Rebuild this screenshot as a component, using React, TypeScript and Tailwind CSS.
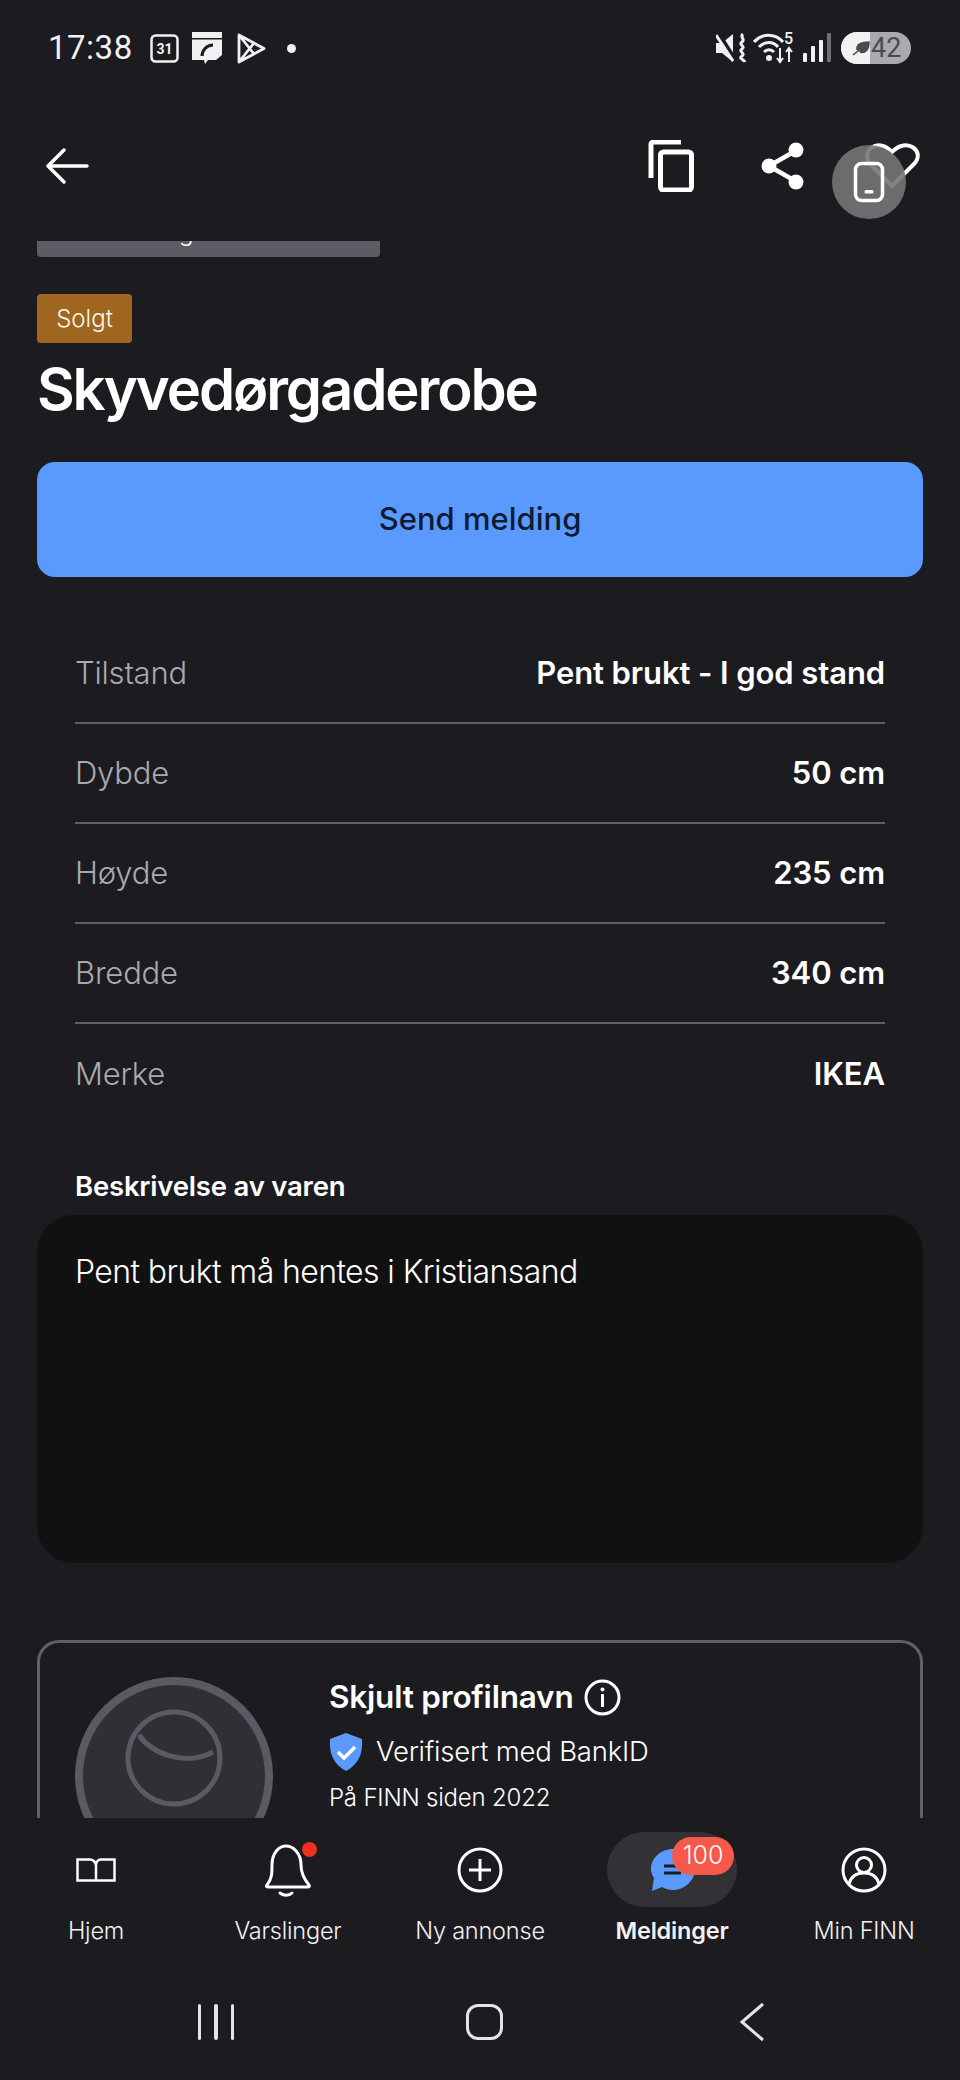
const FONT = "font-['Inter','Noto_Sans',sans-serif]";

const rows = [
  { label: "Tilstand", value: "Pent brukt - I god stand" },
  { label: "Dybde", value: "50 cm" },
  { label: "Høyde", value: "235 cm" },
  { label: "Bredde", value: "340 cm" },
  { label: "Merke", value: "IKEA" },
];

const StatusBar = () => (
  <div className="h-[96px] shrink-0 flex items-center pl-[48px] pr-[49px] text-[#f1f1f3]">
    <span className="text-[33px] font-normal w-[102px] font-['Roboto',sans-serif] tracking-[0.5px]">17:38</span>
    <svg width="29" height="29" viewBox="0 0 29 29">
      <rect x="1.5" y="1.5" width="26" height="26" rx="4" fill="none" stroke="currentColor" strokeWidth="2.5" />
      <text x="14.5" y="20" textAnchor="middle" fontSize="14" fontWeight="700" fill="currentColor" fontFamily="Roboto">31</text>
    </svg>
    <svg width="30" height="32" viewBox="0 0 30 32" className="ml-[13px]">
      <path d="M0 0h30v23l-6 5h-8l-3 4-1-4H0z" fill="currentColor" />
      <rect x="0" y="6" width="30" height="1.5" fill="#1b1b20" />
      <path d="M10 24c0-6 5-11 11-11" fill="none" stroke="#1b1b20" strokeWidth="3" />
    </svg>
    <svg width="31" height="33" viewBox="0 0 31 33" className="ml-[14px]">
      <path d="M3 3l25 13.500L3 30z M3 3l15 19 M3 30l15-19" fill="none" stroke="currentColor" strokeWidth="2.800" strokeLinejoin="round" />
    </svg>
    <div className="ml-[20px] w-[9px] h-[9px] rounded-full bg-[#f1f1f3]" />
    <div className="flex-1" />
    <svg width="32" height="30" viewBox="0 0 32 30">
      <path d="M0 10h6l11-9v28L6 20H0z" fill="currentColor" />
      <path d="M3 1l17 27" stroke="#1b1b20" strokeWidth="4" />
      <path d="M0 2l17 26" stroke="currentColor" strokeWidth="3" />
      <path d="M27 1c-4 3 3 5-1 8s4 4 0 7 4 4 0 7 2 3 3 6" fill="none" stroke="currentColor" strokeWidth="3" />
    </svg>
    <svg width="42" height="32" viewBox="0 0 42 32" className="ml-[5px]">
      <path d="M1 10c8-9 21-9 29 0M6 15c6-6 14-6 19 0M11 20c3-3 7-3 10 0" fill="none" stroke="currentColor" strokeWidth="3" />
      <circle cx="16" cy="26" r="3" fill="currentColor" />
      <text x="35.500" y="12" textAnchor="middle" fontSize="16" fontWeight="500" fill="currentColor" fontFamily="Roboto">5</text>
      <path d="M27 16v14M24 26l3 4 3-4M36 30V16M33 20l3-4 3 4" fill="none" stroke="currentColor" strokeWidth="2" />
    </svg>
    <svg width="28" height="30" viewBox="0 0 28 30" className="ml-[8px]">
      <rect x="0" y="20" width="4" height="9" rx="1" fill="currentColor" />
      <rect x="8" y="13" width="4" height="16" rx="1" fill="currentColor" />
      <rect x="16" y="7" width="4" height="22" rx="1" fill="currentColor" />
      <rect x="24" y="0" width="4" height="29" rx="1" fill="#6e6e73" />
    </svg>
    <div className="ml-[10px] w-[70px] h-[32px] rounded-full overflow-hidden flex bg-[#a9a9ae]">
      <div className="w-[29px] bg-[#f1f1f3] flex items-center justify-end">
        <svg width="18" height="18" viewBox="0 0 18 18">
          <path d="M1 16c3-2 4-3 6-5M5 11C4 5 10 3 17 3c0 7-3 12-9 10" fill="#4a4a50" stroke="#4a4a50" strokeWidth="1.500" />
        </svg>
      </div>
      <span className="pl-[1px] text-[#4a4a50] text-[27px] leading-[32px] font-['Roboto',sans-serif]">42</span>
    </div>
  </div>
);

const Header = () => (
  <div className="h-[145px] shrink-0 relative flex items-center pl-[45px] pb-[5px] text-white">
    <svg width="44" height="36" viewBox="0 0 44 36">
      <path d="M42 18H3M19 2L3 18l16 16" fill="none" stroke="currentColor" strokeWidth="3.500" strokeLinecap="round" strokeLinejoin="round" />
    </svg>
    <div className="flex-1" />
    <svg width="46" height="52" viewBox="0 0 46 52">
      <path d="M33 2H5a3 3 0 0 0-2 2v34" fill="none" stroke="currentColor" strokeWidth="5" />
      <rect x="12.500" y="12" width="31" height="38" rx="3" fill="none" stroke="currentColor" strokeWidth="5" />
    </svg>
    <svg width="44" height="48" viewBox="0 0 44 48" className="ml-[67px]">
      <path d="M8 24L36 8M8 24l28 16" stroke="currentColor" strokeWidth="4.500" />
      <circle cx="35" cy="8" r="7.500" fill="currentColor" />
      <circle cx="8" cy="24" r="7.500" fill="currentColor" />
      <circle cx="35" cy="40" r="7.500" fill="currentColor" />
    </svg>
    <svg width="62" height="50" viewBox="0 0 62 50" className="ml-[56px] mr-[37px] mt-[-2px]">
      <path d="M31 46L9 24C-1 12 16 -4 31 12 46 -4 65 12 53 24z" fill="none" stroke="currentColor" strokeWidth="4" />
    </svg>
    {/* floating screen-capture button over the heart */}
    <div className="absolute left-[832px] top-[49px] w-[74px] h-[74px] rounded-full bg-[#767678]/90 flex items-center justify-center">
      <svg width="32" height="42" viewBox="0 0 32 42">
        <rect x="2.500" y="2.500" width="27" height="37" rx="6" fill="none" stroke="white" strokeWidth="3.500" />
        <rect x="11.500" y="29" width="9" height="3.500" rx="1.500" fill="white" />
      </svg>
    </div>
  </div>
);

const ProfileCard = () => (
  <div className="mx-[37px] mt-[77px] h-[260px] shrink-0 rounded-[22px] border-[3px] border-[#5f5f67] pl-[35px] pt-[34px] flex gap-[56px]">
    <div className="w-[198px] h-[198px] rounded-full border-[8px] border-[#5a5a63] bg-[#2f2f35] flex items-start justify-center pt-[24px] shrink-0">
      <svg width="98" height="98" viewBox="0 0 98 98">
        <circle cx="49" cy="49" r="46" fill="none" stroke="#5a5a63" strokeWidth="5" />
        <path d="M14 26C26 44 60 58 88 43" fill="none" stroke="#5a5a63" strokeWidth="5" />
      </svg>
    </div>
    <div className="flex flex-col text-white">
      <div className="flex items-center gap-[11px] h-[40px]">
        <span className="text-[31.500px] font-semibold tracking-[-0.2px]">Skjult profilnavn</span>
        <svg width="37" height="37" viewBox="0 0 37 37">
          <circle cx="18.500" cy="18.500" r="16.500" fill="none" stroke="white" strokeWidth="3" />
          <rect x="17" y="15" width="3" height="13" fill="white" />
          <circle cx="18.500" cy="10.500" r="2" fill="white" />
        </svg>
      </div>
      <div className="flex items-center gap-[13px] mt-[16px] h-[38px]">
        <svg width="34" height="38" viewBox="0 0 34 38">
          <path d="M17 0l16 6c1 14-3 25-16 32C4 31 0 20 1 6z" fill="#5a9afe" />
          <path d="M9 19l6 6 11-11" fill="none" stroke="white" strokeWidth="3.500" />
        </svg>
        <span className="text-[27.500px] font-light tracking-[-0.2px]">Verifisert med BankID</span>
      </div>
      <span className="text-[24px] font-light mt-[9px] tracking-[-0.2px]">På FINN siden 2022</span>
    </div>
  </div>
);

const NavItem = ({ label, bold, children }: { label: string; bold?: boolean; children: React.ReactNode }) => (
  <div className="flex flex-col items-center">
    <div className="h-[75px] w-[130px] flex items-center justify-center relative">{children}</div>
    <span className={`mt-[6px] text-[23.500px] leading-[36px] text-[#f1f1f3] tracking-[-0.2px] ${bold ? "font-semibold" : "font-light"}`}>
      {label}
    </span>
  </div>
);

const BottomNav = () => (
  <div className="h-[161px] shrink-0 pt-[14px] grid grid-cols-5 text-white">
    <NavItem label="Hjem">
      <svg width="40" height="24" viewBox="0 0 40 24">
        <path d="M1.500 1.500h12c4 0 6 3 6.500 6v15H1.500zM20 7.500c0-3 1.500-6 5-6h13.500v21H20" fill="none" stroke="currentColor" strokeWidth="2.500" />
      </svg>
    </NavItem>
    <NavItem label="Varslinger">
      <svg width="50" height="56" viewBox="0 0 50 56">
        <path d="M3 43c5-6 5-12 5-20C8 11 15 4 22 4s15 7 15 19c0 8 3 14 8 20 1 1 0 2-1 2H4c-2 0-2-1-1-2z" transform="translate(1 0)" fill="none" stroke="currentColor" strokeWidth="3" strokeLinejoin="round" />
        <path d="M17 51c4 3 9 3 12 0" fill="none" stroke="currentColor" strokeWidth="3" strokeLinecap="round" />
      </svg>
      <div className="absolute left-[79px] top-[10px] w-[15px] h-[15px] rounded-full bg-[#f0301c]" />
    </NavItem>
    <NavItem label="Ny annonse">
      <svg width="46" height="46" viewBox="0 0 46 46">
        <circle cx="23" cy="23" r="21" fill="none" stroke="currentColor" strokeWidth="3" />
        <path d="M23 12v22M12 23h22" stroke="currentColor" strokeWidth="3" />
      </svg>
    </NavItem>
    <NavItem label="Meldinger" bold>
      <div className="absolute inset-0 rounded-full bg-[#313136]" />
      <svg width="44" height="44" viewBox="0 0 44 44" className="absolute left-[44px] top-[17px]">
        <path d="M22 0c12 0 22 9 22 20S34 41 22 41c-4 0-8-1-11-3L1 42l2-13C1 26 0 23 0 20 0 9 10 0 22 0z" fill="#5a9afe" />
        <path d="M13 17h17M13 24h17" stroke="#1b1b20" strokeWidth="3" />
      </svg>
      <div className="absolute left-[65px] top-[5px] w-[62px] h-[38px] rounded-full bg-[#f6584a] flex items-center justify-center text-[25px] font-light text-white">
        100
      </div>
    </NavItem>
    <NavItem label="Min FINN">
      <svg width="46" height="46" viewBox="0 0 46 46">
        <circle cx="23" cy="23" r="21" fill="none" stroke="currentColor" strokeWidth="3" />
        <circle cx="23" cy="18" r="7.500" fill="none" stroke="currentColor" strokeWidth="3" />
        <path d="M8 37c2-8 8-11 15-11s13 3 15 11" fill="none" stroke="currentColor" strokeWidth="3" />
      </svg>
    </NavItem>
  </div>
);

const SystemNav = () => (
  <div className="flex-1 grid grid-cols-3 items-center pl-[82px] pr-[74px] pb-[16px] text-[#e4e4e6]">
    <div className="flex justify-center gap-[13px]">
      <div className="w-[3.500px] h-[36px] bg-[#e4e4e6] rounded-sm" />
      <div className="w-[3.500px] h-[36px] bg-[#e4e4e6] rounded-sm" />
      <div className="w-[3.500px] h-[36px] bg-[#e4e4e6] rounded-sm" />
    </div>
    <div className="flex justify-center">
      <div className="w-[37px] h-[36px] rounded-[12px] border-[3.500px] border-[#e4e4e6]" />
    </div>
    <div className="flex justify-center">
      <svg width="26" height="40" viewBox="0 0 26 40">
        <path d="M24 2L3 20l21 18" fill="none" stroke="currentColor" strokeWidth="3" />
      </svg>
    </div>
  </div>
);

export default function App() {
  return (
    <div className={`w-[960px] h-[2080px] bg-[#1b1b20] flex flex-col overflow-hidden ${FONT}`}>
      <StatusBar />
      <Header />
      <main className="h-[1577px] shrink-0 overflow-hidden flex flex-col text-white">
        <div className="mx-[37px] w-[343px] h-[16px] shrink-0 bg-[#5c5c65] rounded-b-[4px] overflow-hidden pl-[142px]">
          <span className="block -mt-[24px] text-[24px] leading-[32px] font-light">g</span>
        </div>
        <div className="mx-[37px] mt-[37px] w-[95px] h-[49px] shrink-0 rounded-[4px] bg-[#9e661f] flex items-center justify-center text-[24px] font-light text-[#fdf6ea]">
          Solgt
        </div>
        <h1 className="mx-[37px] mt-[10px] text-[58px] leading-[72px] font-semibold tracking-[-2.100px]">Skyvedørgaderobe</h1>
        <button className="mx-[37px] mt-[37px] h-[115px] shrink-0 rounded-[18px] bg-[#5a9afe] text-[#0f1a33] text-[31px] font-medium">
          Send melding
        </button>
        <div className="mx-[75px] mt-[47px] flex flex-col">
          {rows.map((r, i) => (
            <div
              key={r.label}
              className={`h-[100px] flex items-center justify-between text-[31px] ${i < rows.length - 1 ? "border-b-[2px] border-[#5f5f67]" : ""}`}
            >
              <span className="font-light text-[#a9a9b0] tracking-[-0.2px]">{r.label}</span>
              <span className="font-semibold text-white tracking-[-0.1px]">{r.value}</span>
            </div>
          ))}
        </div>
        <div className="mx-[75px] mt-[44px] text-[27.500px] leading-[36px] font-semibold tracking-[-0.2px]">Beskrivelse av varen</div>
        <div className="mx-[37px] mt-[11px] h-[348px] shrink-0 rounded-[37px] bg-[#111112] px-[38px] pt-[36px] text-[32px] leading-[42px] font-light tracking-[-0.6px]">
          Pent brukt må hentes i Kristiansand
        </div>
        <ProfileCard />
      </main>
      <BottomNav />
      <SystemNav />
    </div>
  );
}
